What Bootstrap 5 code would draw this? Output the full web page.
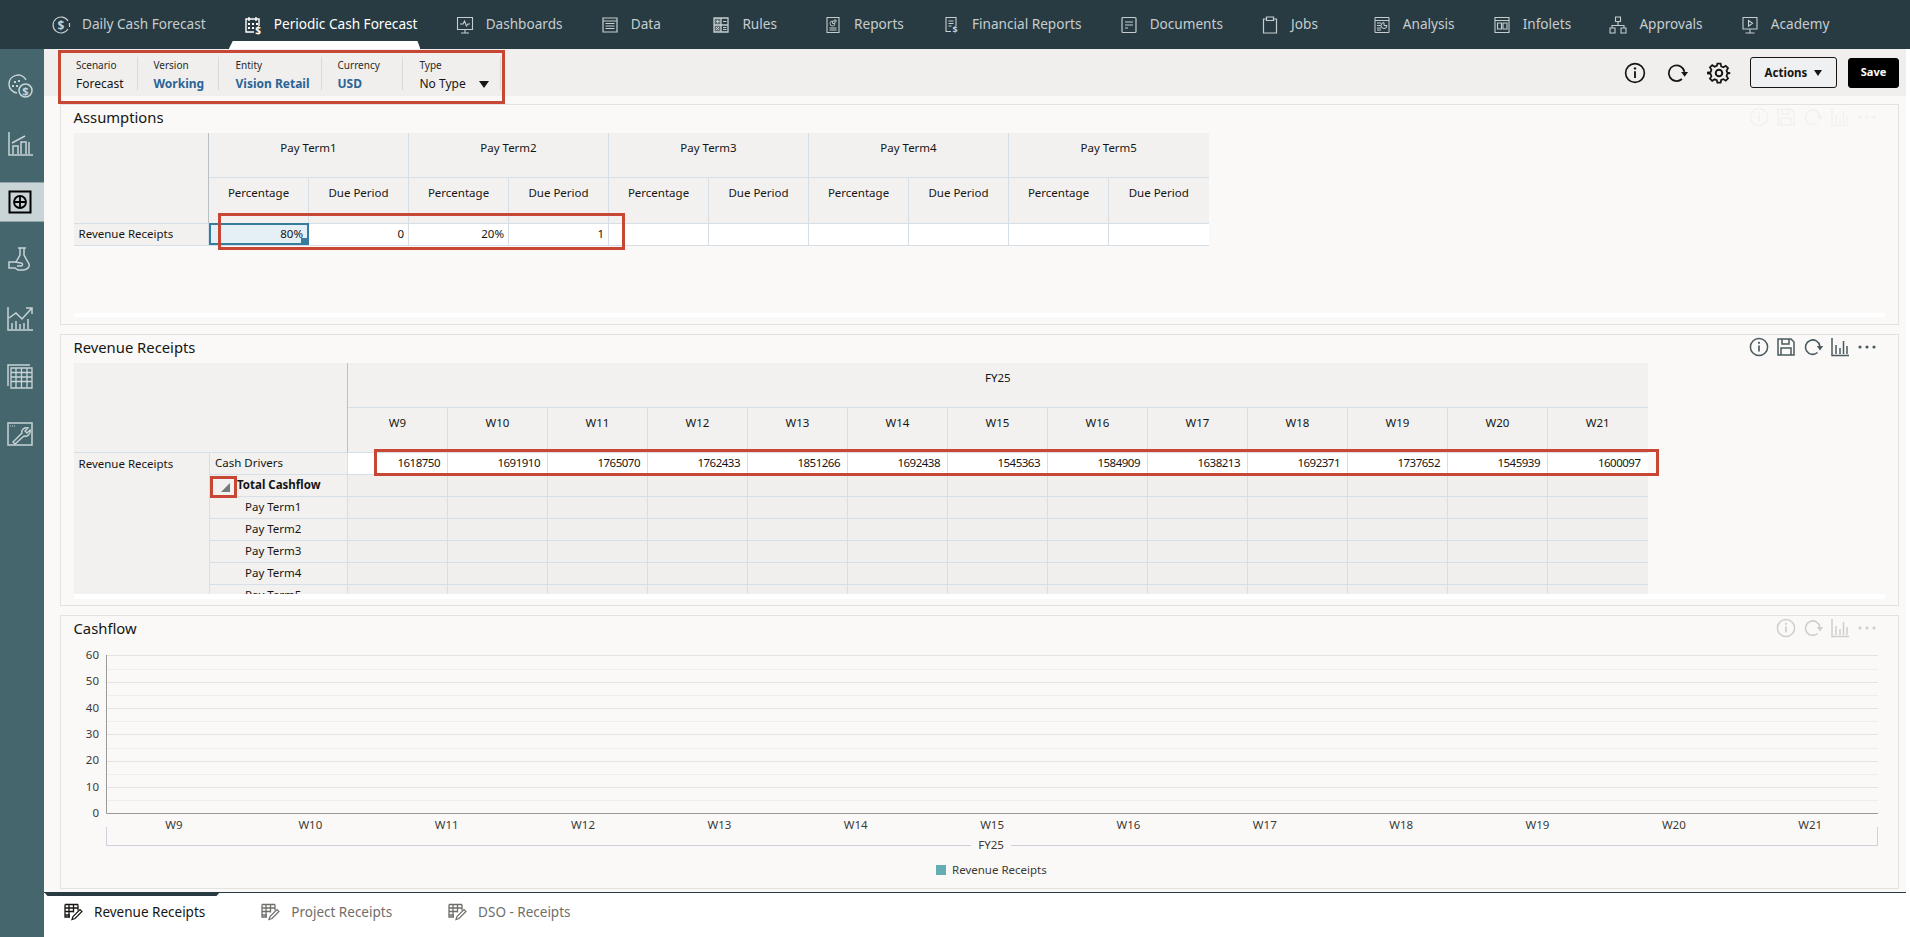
<!DOCTYPE html>
<html lang="en"><head><meta charset="utf-8"><title>Periodic Cash Forecast</title>
<link href="https://cdn.jsdelivr.net/npm/bootstrap@5.3.0/dist/css/bootstrap.min.css" rel="stylesheet">
<style>
html,body{height:100%;overflow:hidden}
body{font-family:"Noto Sans","Liberation Sans",sans-serif;font-size:12px;color:#161513;background:#fff}
.app-shell{height:937px;position:relative}
.defs-holder{position:absolute}
.topnav{height:49px;background:#283b42;padding-left:51px;gap:37.2px;color:#c6cdcf;font-size:13.6px;white-space:nowrap}
.topitem{position:relative;height:49px;gap:11px}
.topitem svg{width:20px;height:20px;flex:none}
.topitem span{min-width:43.5px}
.topitem.on{color:#fff}
.topitem.on::after{content:"";position:absolute;left:-14px;right:-3px;bottom:0;height:8px;background:#fff;clip-path:polygon(4px 0,calc(100% - 3px) 0,100% 100%,0 100%)}
.sidebar{width:44px;background:#46666d;padding-top:17px;flex:none}
.sideitem{height:40px;margin-bottom:18px;padding-right:4px;color:#c8d4d6}
.sideitem svg{width:28px;height:28px}
.sideitem.on{background:#c8d4d6;border-top:1px solid #90a4a9;border-bottom:1px solid #90a4a9;color:#000}
.mainarea{width:1862px;background:#faf9f7;flex:none}
.toolbar{height:47px;background:#f1efed;padding-right:7px}
.ctx{height:33px;margin-top:1px;border-right:1px solid #dcdad7;line-height:1}
.ctxbox{padding-left:16px;gap:0}
.ctx1{width:77.5px;padding-left:16px}.ctx2{width:81px;padding-left:16px}.ctx3{width:103px;padding-left:17px}.ctx4{width:81px;padding-left:16px}.ctx5{width:98px;padding-left:17px;position:relative}
.ctxlab{font-size:10px;display:block;color:#2a2a28;margin-bottom:8px;margin-top:-1px}
.ctxval{font-size:12px;display:block}
.ctxval.lnk{font-weight:700;color:#2a6496}
.ctxcaret{position:absolute;right:11px;top:24px;width:0;height:0;border-left:5px solid transparent;border-right:5px solid transparent;border-top:7px solid #161513}
.tbicons{gap:18px}
.tbicon{width:24px;height:24px;color:#161513}
.btn-act{width:87px;height:31px;padding:0;font-size:11.5px;font-weight:700;background:#eef0f1;border:1px solid #161513;color:#161513;border-radius:3px;margin-left:19px}
.btn-act::after{content:"";display:inline-block;margin-left:7px;vertical-align:1px;border-left:4.5px solid transparent;border-right:4.5px solid transparent;border-top:6px solid #161513}
.btn-sv{width:51px;height:30px;padding:0;font-size:11px;font-weight:700;background:#000;border:1px solid #000;color:#fff;border-radius:3px;margin-left:11px}
.panelbox{margin:0 7px 9px 16px;border:1px solid #e4e2df;background:#faf9f7;padding:0 13px 0 12.5px}
.ph1{height:221px;margin-top:8px}.ph2{height:272px}.ph3{height:274px;margin-bottom:3px}
.phead{height:28px}
.ptitle{font-size:14.8px;color:#161513;font-weight:400;margin:0;line-height:25px}
.picons{margin-right:7px;gap:5px;padding-top:1px}
.picons svg{width:22px;height:22px;color:#4a5a60}
.picons.faint svg{color:#cfcecb}
.picons.ghost svg{color:#f3f1ef}
.gridwrap{overflow:hidden;border-bottom:5px solid #fff}
.gw2{height:236px}
.gw1{height:184px;border-bottom-width:4px}
.gridtbl{table-layout:fixed;border-collapse:collapse;margin:0;width:auto;font-size:11.5px;--bs-table-bg:transparent;color:#161513}
.gridtbl th,.gridtbl td{padding:0 5px;border:1px solid #d6dfe6;font-weight:400;vertical-align:middle;line-height:18px;overflow:hidden;white-space:nowrap;box-shadow:none}
.gridtbl tr>:first-child{border-left:0}
.gridtbl tr>:last-child{border-right:0}
.gridtbl thead tr:first-child>*{border-top:0}
.gridtbl th.hcell{background:#f2f1ef;text-align:center;padding-bottom:14px}
.gridtbl th.hcorner{background:#f2f1ef;border-right:1px solid #b9bfc2}
.gridtbl td.rlab{background:#f2f1ef;text-align:left;padding-bottom:1px}
.gridtbl td.rowhead{vertical-align:top;padding-top:2px}
.gridtbl td.vcell{background:#fff;text-align:right;padding-right:4px;padding-bottom:1px}
.gridtbl.wk td.vcell{padding-right:7px;letter-spacing:-.5px}
.gridtbl td.ecell{background:#f0efed}
.gridtbl td.selcell{background:#e4f0f6;position:relative;outline:2px solid #367c9c;outline-offset:-2px;padding-right:5px}
.selcell::after{content:"";position:absolute;right:1px;bottom:1px;width:6px;height:6px;background:#367c9c}
.gridtbl td.sub1{padding-left:35px}
.gridtbl td.tot{font-weight:700;padding-left:27px;position:relative}
.tot::before{content:"";position:absolute;left:11px;top:8px;border-left:9px solid transparent;border-bottom:9px solid #747b7c}
.chartsvg{display:block;margin:0 0 0 -12.5px}
.chartsvg text{font-family:"Noto Sans","Liberation Sans",sans-serif;font-size:11.5px;fill:#3a3a38}
.chartsvg .leg{font-size:11.5px}
.bottomtabs{height:45px;border-top:1px solid #283b42;position:relative;color:#6f6e6b;font-size:13.5px;background:#fff}
.bottomtabs::before{content:"";position:absolute;left:0;top:-1px;width:176px;height:4px;background:#283b42;clip-path:polygon(0 0,100% 0,98% 100%,2% 100%)}
.btab{gap:11px;height:38px}
.btab svg{width:20px;height:20px}
.btab.on{color:#161513}
.bt1{margin-left:19px}.bt2,.bt3{margin-left:55px}
.redbox{position:absolute;border:3px solid #c74634;pointer-events:none}
.rb1{left:58px;top:50px;width:447px;height:54px}
.rb2{left:218px;top:213px;width:407px;height:37px}
.rb3{left:210px;top:476px;width:27px;height:22px}
.rb4{left:374px;top:449px;width:1285px;height:27px}
</style></head>
<body>
<svg width="0" height="0" class="defs-holder" aria-hidden="true"><defs>
<symbol id="i-dollar" viewBox="0 0 20 20"><path d="M17 6A8 8 0 1 0 17 14M18.500 8v4" fill="none" stroke="currentColor" stroke-width="1.200"/><text x="10" y="14.500" font-size="12" font-weight="700" text-anchor="middle" fill="currentColor">$</text></symbol>
<symbol id="i-cal" viewBox="0 0 20 20"><path d="M11 17H3V4h13v7M6 2v4M13 2v4" fill="none" stroke="currentColor" stroke-width="1.400"/><path d="M5 8h2v2H5zM9 8h2v2H9zM13 8h2v2h-2zM5 12h2v2H5zM9 12h2v2H9z" fill="currentColor"/><text x="15" y="19" font-size="10" font-weight="700" text-anchor="middle" fill="currentColor">$</text></symbol>
<symbol id="i-mon" viewBox="0 0 20 20"><path d="M2.500 2.500h15v12h-15zM10 14.500v3M6 18h8M5 9h3l1.500-3 2 5 1.500-2h2" fill="none" stroke="currentColor" stroke-width="1.100"/></symbol>
<symbol id="i-data" viewBox="0 0 20 20"><path d="M3 3h14v14H3zM3 6h14" fill="none" stroke="currentColor" stroke-width="1.200"/><path d="M5.500 8.500h9M5.500 11h9M5.500 13.500h9" stroke="currentColor" stroke-width="1.200"/></symbol>
<symbol id="i-rules" viewBox="0 0 20 20"><path d="M3 3h14v14H3zM3 10h14M10 3v14" fill="none" stroke="currentColor" stroke-width="1.300"/><path d="M3 3h7v7H3zM3 10h7v7H3z" fill="currentColor" opacity=".35"/><path d="M5 6.500h3.500M6.700 4.800v3.500M12 6.500h3.500M5 12l3 3M8 12l-3 3M12 12.500h3.500M12 14.500h3.500" stroke="currentColor" stroke-width="1"/></symbol>
<symbol id="i-rep" viewBox="0 0 20 20"><path d="M4 2.500h12v15H4zM6.500 13h7M6.500 15h7" fill="none" stroke="currentColor" stroke-width="1.100"/><path d="M12 8.500a2.500 2.500 0 1 1-2.500-2.500v2.500zM11 5h2v2h-2z" fill="none" stroke="currentColor" stroke-width=".9"/></symbol>
<symbol id="i-fin" viewBox="0 0 20 20"><path d="M15 11V2.500H5v14h5M7.500 6h5M7.500 8.500h5M7.500 11h3" fill="none" stroke="currentColor" stroke-width="1.100"/><text x="14" y="18" font-size="9" font-weight="700" text-anchor="middle" fill="currentColor">$</text></symbol>
<symbol id="i-doc" viewBox="0 0 20 20"><rect x="3" y="2.500" width="14" height="15" rx="1" fill="none" stroke="currentColor" stroke-width="1.200"/><path d="M6 7h8M6 10h8M6 13h3" stroke="currentColor" stroke-width="1.200"/></symbol>
<symbol id="i-clip" viewBox="0 0 20 20"><path d="M6.500 4H3.500v14h13V4h-3M6.500 2h7v3.500h-7z" fill="none" stroke="currentColor" stroke-width="1.200"/></symbol>
<symbol id="i-ana" viewBox="0 0 20 20"><path d="M3 2.500h14v15H3zM3 5.500h14M5 8h4M5 10.500h4M5 13h4M5 15h4" fill="none" stroke="currentColor" stroke-width="1"/><path d="M15 10.500a3 3 0 1 1-3-3v3z" fill="none" stroke="currentColor" stroke-width="1"/></symbol>
<symbol id="i-inf" viewBox="0 0 20 20"><path d="M3 2.500h14v15H3zM3 5.500h14M5.500 8h4v6h-4zM11 8h4v6h-4z" fill="none" stroke="currentColor" stroke-width="1.100"/></symbol>
<symbol id="i-app" viewBox="0 0 20 20"><path d="M7.500 2h5v4.500h-5zM10 6.500v4M4 13v-2.500h12V13M2 13h5v5H2zM13 13h5v5h-5z" fill="none" stroke="currentColor" stroke-width="1.100"/></symbol>
<symbol id="i-aca" viewBox="0 0 20 20"><path d="M3 2.500h14v11.500H3zM10 14v3.500M5.500 18h9M8.500 5.500l4 2.800-4 2.800z" fill="none" stroke="currentColor" stroke-width="1.100"/></symbol>
<symbol id="i-grid" viewBox="0 0 20 20"><path d="M2 2.500h13M2 6h13M2 9.500h8M2 13h5M2 2.500V15h5M6 2.500v12M10.500 2.500v8M15 2.500v6" fill="none" stroke="currentColor" stroke-width="1.300"/><path d="M9 17.500l1-3 7-7 2 2-7 7z" fill="none" stroke="currentColor" stroke-width="1.200"/></symbol>
<symbol id="s-1" viewBox="0 0 28 28"><path d="M11 21A9 9 0 0 1 3 12a9 9 0 0 1 17-4" fill="none" stroke="currentColor" stroke-width="1.500"/><path d="M6 13h2v2H6zM10 13h2v2h-2zM8 9h2v2H8zM12 8h2v2h-2z" fill="currentColor"/><circle cx="19.500" cy="18.500" r="6.500" fill="none" stroke="currentColor" stroke-width="1.500"/><text x="19.500" y="22.500" font-size="11" font-weight="700" text-anchor="middle" fill="currentColor">$</text></symbol>
<symbol id="s-2" viewBox="0 0 28 28"><path d="M3 2v23h24M6 13l13-7M7 24V16h5v8M15 24V12h5v12M23 24V12" fill="none" stroke="currentColor" stroke-width="1.500"/></symbol>
<symbol id="s-3" viewBox="0 0 28 28"><rect x="3.500" y="3.500" width="21" height="21" fill="none" stroke="currentColor" stroke-width="2"/><circle cx="14" cy="14" r="6" fill="none" stroke="currentColor" stroke-width="1.800"/><path d="M14 8v12M8 14h12" stroke="currentColor" stroke-width="1.800"/></symbol>
<symbol id="s-4" viewBox="0 0 28 28"><path d="M12 2h8M14 2v7l-4 7M18 2v7l5 9c1 3-2 6-6 6h-5l-3-2H3v-6h6l6 1c2 0 2 3 0 3h-4" fill="none" stroke="currentColor" stroke-width="1.500"/></symbol>
<symbol id="s-5" viewBox="0 0 28 28"><path d="M2 3v23h25M3 14l7-5 6 6 9-10M20 4h6v6M6 25v-6M10 25v-8M14 25v-5M18 25v-6M22 25v-10" fill="none" stroke="currentColor" stroke-width="1.500"/></symbol>
<symbol id="s-6" viewBox="0 0 28 28"><path d="M2 24V3h22" fill="none" stroke="currentColor" stroke-width="1.500"/><path d="M5 6h21v20H5zM5 10.500h21M5 15h21M5 19.500h21M10 6v20M15.500 6v20M21 6v20" fill="none" stroke="currentColor" stroke-width="1.300"/></symbol>
<symbol id="s-7" viewBox="0 0 28 28"><rect x="2" y="3" width="24" height="22" fill="none" stroke="currentColor" stroke-width="1.500"/><path d="M4 6h6" stroke="currentColor" stroke-width="1.200" stroke-dasharray="1 1"/><path d="M7 22l9-9c-1-3 2-6 6-5l-3 3 2 2 3-3c1 4-3 7-6 6l-9 8z" fill="none" stroke="currentColor" stroke-width="1.400"/></symbol>
<symbol id="t-info" viewBox="0 0 22 22"><circle cx="11" cy="11" r="8.600" fill="none" stroke="currentColor" stroke-width="1.500"/><path d="M11 9.500v6" stroke="currentColor" stroke-width="1.700"/><circle cx="11" cy="6.800" r="1.100" fill="currentColor"/></symbol>
<symbol id="t-ref" viewBox="0 0 22 22"><path d="M15.500 16.500A7.200 7.200 0 1 1 17.800 10" fill="none" stroke="currentColor" stroke-width="1.600"/><path d="M14.800 10h6.400l-3.200 4.500z" fill="currentColor"/></symbol>
<symbol id="t-gear" viewBox="0 0 22 22"><circle cx="11" cy="11" r="3" fill="none" stroke="currentColor" stroke-width="1.800"/><path d="M9.500 2.500h3l.5 2.500 2 .8 2.200-1.400 2.100 2.100-1.400 2.200.8 2 2.500.5v0l-2.500.5-.8 2 1.400 2.200-2.100 2.100-2.200-1.400-2 .8-.5 2.500h-3L9 17.600l-2-.8-2.200 1.400-2.100-2.100 1.400-2.200-.8-2L.8 11.400v-.8l2.500-.5.8-2-1.400-2.200 2.100-2.100L7 5.200l2-.8z" fill="none" stroke="currentColor" stroke-width="1.600"/></symbol>
<symbol id="t-save" viewBox="0 0 22 22"><path d="M3 3h13l3 3v13H3zM7 3v5h7V3M6 19v-7h10v7" fill="none" stroke="currentColor" stroke-width="1.500"/></symbol>
<symbol id="t-bars" viewBox="0 0 22 22"><path d="M3 2v17.500h17M7 18V9M11 18V12M14.500 18V5M18 18v-8" fill="none" stroke="currentColor" stroke-width="1.500"/></symbol>
<symbol id="t-dots" viewBox="0 0 22 22"><circle cx="4" cy="11" r="1.600" fill="currentColor"/><circle cx="11" cy="11" r="1.600" fill="currentColor"/><circle cx="18" cy="11" r="1.600" fill="currentColor"/></symbol>
</defs></svg>
<div class="app-shell d-flex flex-column">
<nav class="topnav d-flex align-items-center">
<div class="topitem d-flex align-items-center"><svg><use href="#i-dollar"/></svg><span>Daily Cash Forecast</span></div>
<div class="topitem on d-flex align-items-center"><svg><use href="#i-cal"/></svg><span>Periodic Cash Forecast</span></div>
<div class="topitem d-flex align-items-center"><svg><use href="#i-mon"/></svg><span>Dashboards</span></div>
<div class="topitem d-flex align-items-center"><svg><use href="#i-data"/></svg><span>Data</span></div>
<div class="topitem d-flex align-items-center"><svg><use href="#i-rules"/></svg><span>Rules</span></div>
<div class="topitem d-flex align-items-center"><svg><use href="#i-rep"/></svg><span>Reports</span></div>
<div class="topitem d-flex align-items-center"><svg><use href="#i-fin"/></svg><span>Financial Reports</span></div>
<div class="topitem d-flex align-items-center"><svg><use href="#i-doc"/></svg><span>Documents</span></div>
<div class="topitem d-flex align-items-center"><svg><use href="#i-clip"/></svg><span>Jobs</span></div>
<div class="topitem d-flex align-items-center"><svg><use href="#i-ana"/></svg><span>Analysis</span></div>
<div class="topitem d-flex align-items-center"><svg><use href="#i-inf"/></svg><span>Infolets</span></div>
<div class="topitem d-flex align-items-center"><svg><use href="#i-app"/></svg><span>Approvals</span></div>
<div class="topitem d-flex align-items-center"><svg><use href="#i-aca"/></svg><span>Academy</span></div>
</nav>
<div class="d-flex flex-grow-1">
<aside class="sidebar">
<div class="sideitem d-flex align-items-center justify-content-center"><svg><use href="#s-1"/></svg></div>
<div class="sideitem d-flex align-items-center justify-content-center"><svg><use href="#s-2"/></svg></div>
<div class="sideitem on d-flex align-items-center justify-content-center"><svg><use href="#s-3"/></svg></div>
<div class="sideitem d-flex align-items-center justify-content-center"><svg><use href="#s-4"/></svg></div>
<div class="sideitem d-flex align-items-center justify-content-center"><svg><use href="#s-5"/></svg></div>
<div class="sideitem d-flex align-items-center justify-content-center"><svg><use href="#s-6"/></svg></div>
<div class="sideitem d-flex align-items-center justify-content-center"><svg><use href="#s-7"/></svg></div>
</aside>
<main class="mainarea d-flex flex-column">
<div class="toolbar d-flex align-items-center">
<div class="ctxbox d-flex"><div class="ctx ctx1 pt-1"><span class="ctxlab">Scenario</span><span class="ctxval">Forecast</span></div>
<div class="ctx ctx2 pt-1"><span class="ctxlab">Version</span><span class="ctxval lnk">Working</span></div>
<div class="ctx ctx3 pt-1"><span class="ctxlab">Entity</span><span class="ctxval lnk">Vision Retail</span></div>
<div class="ctx ctx4 pt-1"><span class="ctxlab">Currency</span><span class="ctxval lnk">USD</span></div>
<div class="ctx ctx5 pt-1"><span class="ctxlab">Type</span><span class="ctxval">No Type</span><span class="ctxcaret"></span></div></div>
<div class="ms-auto tbicons d-flex align-items-center"><svg class="tbicon"><use href="#t-info"/></svg><svg class="tbicon"><use href="#t-ref"/></svg><svg class="tbicon"><use href="#t-gear"/></svg></div>
<button type="button" class="btn btn-act">Actions</button><button type="button" class="btn btn-sv">Save</button>
</div>
<section class="panelbox ph1">
<div class="phead d-flex align-items-start justify-content-between"><h2 class="ptitle">Assumptions</h2><div class="picons ghost d-flex"><svg><use href="#t-info"/></svg><svg><use href="#t-save"/></svg><svg><use href="#t-ref"/></svg><svg><use href="#t-bars"/></svg><svg><use href="#t-dots"/></svg></div></div>
<div class="gridwrap gw1"><table class="table gridtbl" id="tb1"></table></div>
</section>
<section class="panelbox ph2">
<div class="phead d-flex align-items-start justify-content-between"><h2 class="ptitle">Revenue Receipts</h2><div class="picons d-flex"><svg><use href="#t-info"/></svg><svg><use href="#t-save"/></svg><svg><use href="#t-ref"/></svg><svg><use href="#t-bars"/></svg><svg><use href="#t-dots"/></svg></div></div>
<div class="gridwrap gw2"><table class="table gridtbl wk" id="tb2"></table></div>
</section>
<section class="panelbox ph3">
<div class="phead d-flex align-items-start justify-content-between"><h2 class="ptitle">Cashflow</h2><div class="picons faint d-flex"><svg><use href="#t-info"/></svg><svg><use href="#t-ref"/></svg><svg><use href="#t-bars"/></svg><svg><use href="#t-dots"/></svg></div></div>
<svg class="chartsvg" id="chart" width="1838" height="243" viewBox="60 644 1838 243"></svg>
</section>
<div class="bottomtabs d-flex align-items-start">
<div class="btab on bt1 d-flex align-items-center"><svg><use href="#i-grid"/></svg><span>Revenue Receipts</span></div>
<div class="btab bt2 d-flex align-items-center"><svg><use href="#i-grid"/></svg><span>Project Receipts</span></div>
<div class="btab bt3 d-flex align-items-center"><svg><use href="#i-grid"/></svg><span>DSO - Receipts</span></div>
</div>
</main>
</div>
<div class="redbox rb1"></div><div class="redbox rb2"></div><div class="redbox rb3"></div><div class="redbox rb4"></div>
</div>
<script>
(function(){
var h='<colgroup><col style="width:135px">';
for(var i=0;i<10;i++)h+='<col style="width:100px">';
h+='</colgroup><thead><tr style="height:44px"><th class="hcorner" rowspan="2"></th>';
for(i=1;i<=5;i++)h+='<th class="hcell" colspan="2">Pay Term'+i+'</th>';
h+='</tr><tr style="height:46px">';
for(i=0;i<5;i++)h+='<th class="hcell">Percentage</th><th class="hcell">Due Period</th>';
h+='</tr></thead><tbody><tr style="height:22px"><td class="rlab">Revenue Receipts</td><td class="vcell selcell">80%</td><td class="vcell">0</td><td class="vcell">20%</td><td class="vcell">1</td>';
for(i=0;i<6;i++)h+='<td class="vcell"></td>';
h+='</tr></tbody>';
document.getElementById('tb1').innerHTML=h;
var v=[1618750,1691910,1765070,1762433,1851266,1692438,1545363,1584909,1638213,1692371,1737652,1545939,1600097];
h='<colgroup><col style="width:136px"><col style="width:138px">';
for(i=0;i<13;i++)h+='<col style="width:100px">';
h+='</colgroup><thead><tr style="height:44px"><th class="hcorner" rowspan="2" colspan="2"></th><th class="hcell" colspan="13">FY25</th></tr><tr style="height:45px">';
for(i=9;i<=21;i++)h+='<th class="hcell">W'+i+'</th>';
h+='</tr></thead><tbody><tr style="height:22px"><td class="rlab rowhead" rowspan="7">Revenue Receipts</td><td class="rlab">Cash Drivers</td>';
v.forEach(function(x){h+='<td class="vcell">'+x+'</td>'});
h+='</tr>';
['Total Cashflow','Pay Term1','Pay Term2','Pay Term3','Pay Term4','Pay Term5'].forEach(function(n,k){
h+='<tr style="height:22px"><td class="rlab '+(k?'sub1':'tot')+'">'+n+'</td>';
for(var j=0;j<13;j++)h+='<td class="ecell"></td>';h+='</tr>';});
h+='</tbody>';
document.getElementById('tb2').innerHTML=h;
var s='',ys=[655,669,682,695,708,721,734,748,761,774,787,800];
ys.forEach(function(y,i){s+='<line x1="105" x2="1877" y1="'+(y+.5)+'" y2="'+(y+.5)+'" stroke="'+(i%2?'#efeeeb':'#e4e4e6')+'"/>'});
s+='<path d="M105.500 655V813.500H1877" fill="none" stroke="#9a9a98"/>';
[60,50,40,30,20,10,0].forEach(function(t,i){s+='<text x="98" y="'+(659+i*26.3)+'" text-anchor="end">'+t+'</text>'});
for(i=0;i<13;i++)s+='<text x="'+(173+i*136.35)+'" y="829" text-anchor="middle">W'+(i+9)+'</text>';
s+='<path d="M105.500 827V845.500H970M1010 845.500H1876.500V827" fill="none" stroke="#cfcfdc"/>';
s+='<text x="990" y="849" text-anchor="middle">FY25</text>';
s+='<rect x="935" y="865" width="10" height="10" fill="#65adb3"/><text class="leg" x="951" y="874">Revenue Receipts</text>';
document.getElementById('chart').innerHTML=s;
})();
</script>
<script src="https://cdn.jsdelivr.net/npm/bootstrap@5.3.0/dist/js/bootstrap.bundle.min.js"></script>
</body></html>
